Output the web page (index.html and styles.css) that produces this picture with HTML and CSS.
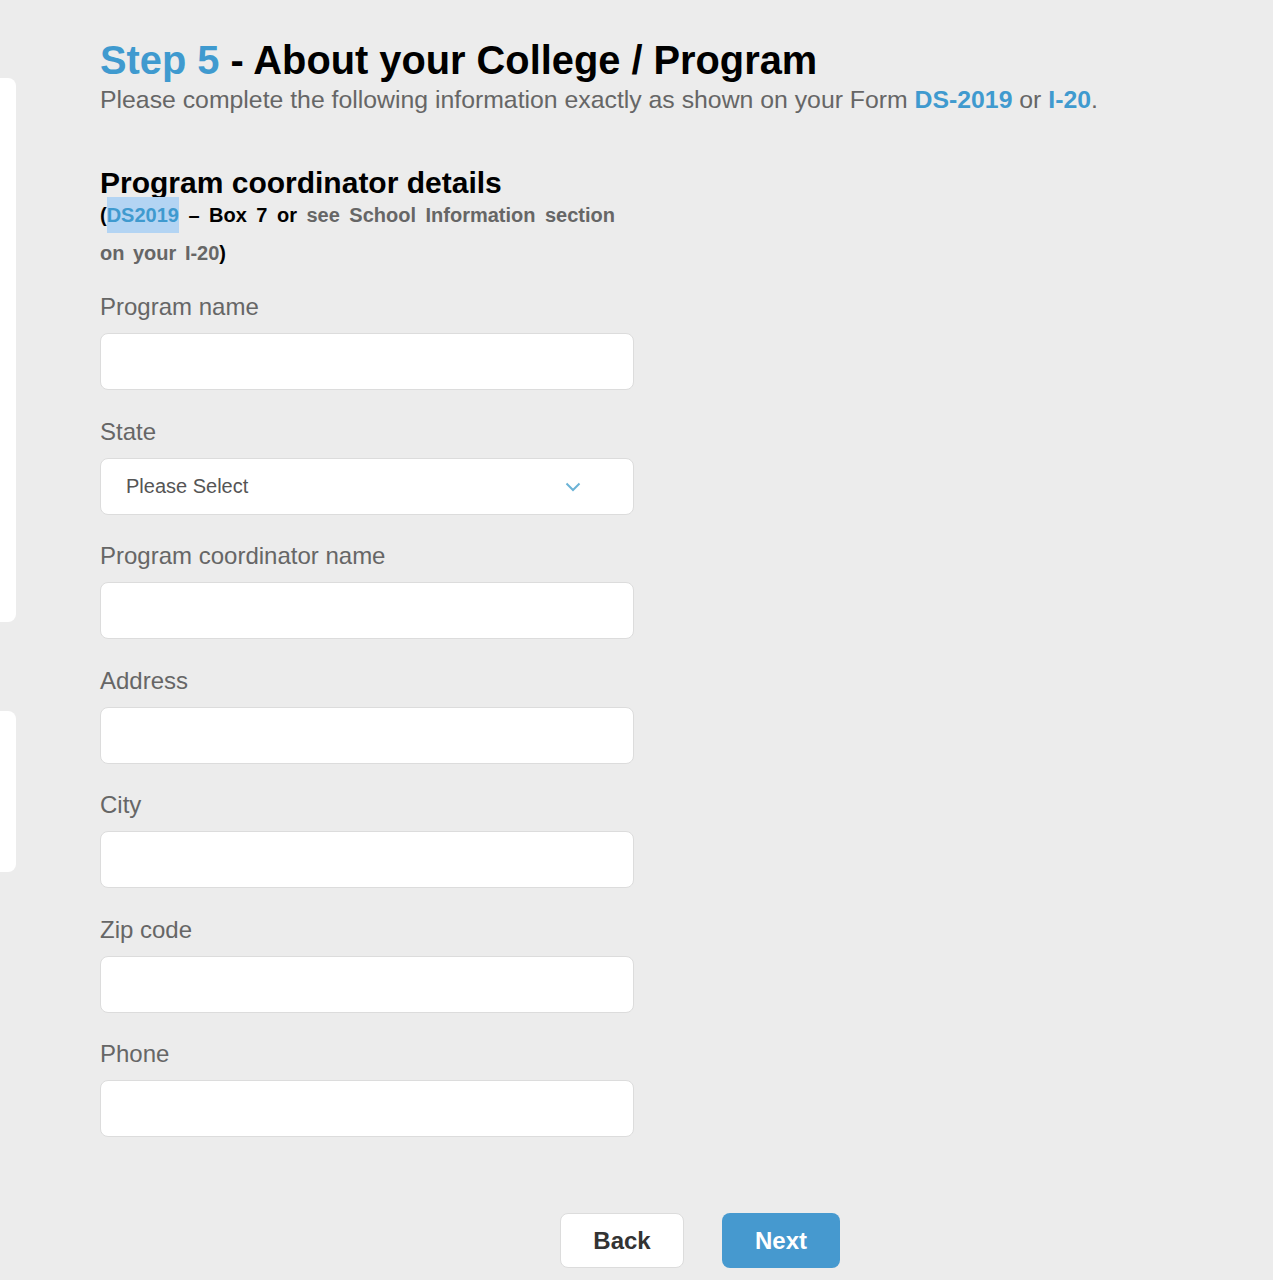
FILE: index.html
```html
<!DOCTYPE html>
<html lang="en">
<head>
    <meta charset="UTF-8">
    <meta name="viewport" content="width=device-width, initial-scale=1.0">
    <title>Step 5 - About your College / Program</title>
    <link rel="stylesheet" href="styles.css">
</head>
<body>

    <div class="page">
        <div class="side">
            <div class="side-card side-card-top"></div>
            <div class="side-card side-card-bottom"></div>
        </div>

        <div class="main">
            <h1><span class="step">Step 5</span> - About your College / Program</h1>
            <p class="intro">Please complete the following information exactly as shown on your Form <a href="#">DS-2019</a> or <a href="#">I-20</a>.</p>

            <div class="form">
                <h2>Program coordinator details</h2>
                <p class="hint">(<span class="ds">DS2019</span> &ndash; Box 7 or <span class="grey">see School Information section on your I-20</span>)</p>

                <div class="form-group">
                    <label for="programName">Program name</label>
                    <input type="text" id="programName">
                </div>

                <div class="form-group">
                    <label for="state">State</label>
                    <div class="select-box">
                        <select id="state">
                            <option>Please Select</option>
                            <option>Alabama</option>
                            <option>Alaska</option>
                            <option>Arizona</option>
                        </select>
                        <svg class="chevron" width="16" height="10" viewBox="0 0 16 10"><path d="M1.5 1.5 L8 8 L14.5 1.5" fill="none" stroke="#6bb3d6" stroke-width="2"/></svg>
                    </div>
                </div>

                <div class="form-group">
                    <label for="coordName">Program coordinator name</label>
                    <input type="text" id="coordName">
                </div>

                <div class="form-group">
                    <label for="address">Address</label>
                    <input type="text" id="address">
                </div>

                <div class="form-group">
                    <label for="city">City</label>
                    <input type="text" id="city">
                </div>

                <div class="form-group">
                    <label for="zip">Zip code</label>
                    <input type="text" id="zip">
                </div>

                <div class="form-group">
                    <label for="phone">Phone</label>
                    <input type="text" id="phone">
                </div>
            </div>

            <div class="buttons">
                <button class="btn btn-back">Back</button>
                <button class="btn btn-next">Next</button>
            </div>
        </div>
    </div>

</body>
</html>
```

FILE: styles.css
```css
body {
    margin: 0;
    background-color: #ececec;
    font-family: "Liberation Sans", Arial, sans-serif;
}
.page {
    display: flex;
}
.side {
    width: 16px;
    flex-shrink: 0;
    padding-top: 78px;
}
.side-card {
    background-color: #fff;
    border-radius: 0 8px 8px 0;
}
.side-card-top {
    height: 544px;
}
.side-card-bottom {
    height: 161px;
    margin-top: 89px;
}
.main {
    padding: 35px 0 12px 84px;
    flex: 1;
}
h1 {
    margin: 0;
    font-size: 39.8px;
    line-height: 50px;
    color: #000;
}
.step {
    color: #3f9acf;
}
.intro {
    margin: 0;
    font-size: 24.8px;
    line-height: 29px;
    color: #666;
}
.intro a {
    color: #3f9acf;
    font-weight: bold;
    text-decoration: none;
}
.form {
    width: 534px;
    margin-top: 51px;
}
h2 {
    margin: 0;
    font-size: 30px;
    line-height: 36px;
    color: #000;
}
.hint {
    width: 515px;
    margin: -5px 0 0;
    font-size: 20px;
    font-weight: bold;
    line-height: 38px;
    word-spacing: 3px;
    text-align: justify;
    color: #000;
}
.ds {
    display: inline-block;
    line-height: 36px;
    color: #3f9acf;
    background-color: #b3d4f3;
    word-spacing: 0;
}
.grey {
    color: #666;
}
.form-group {
    margin-top: 19px;
}
.form-group + .form-group {
    margin-top: 25.5px;
}
label {
    display: block;
    font-size: 24px;
    line-height: 32px;
    color: #666;
    margin-bottom: 10px;
}
input, select {
    display: block;
    width: 100%;
    height: 57px;
    box-sizing: border-box;
    border: 1px solid #dcdcdc;
    border-radius: 8px;
    background-color: #fff;
    font-family: inherit;
    font-size: 20px;
    padding: 0 25px;
}
.select-box {
    position: relative;
}
select {
    appearance: none;
    -webkit-appearance: none;
    color: #555;
}
.chevron {
    position: absolute;
    right: 53px;
    top: 24px;
    pointer-events: none;
}
.buttons {
    display: flex;
    gap: 38px;
    margin-top: 76px;
    padding-left: 460px;
}
.btn {
    height: 55px;
    border-radius: 8px;
    font-family: inherit;
    font-size: 24px;
    font-weight: bold;
    cursor: pointer;
}
.btn-back {
    width: 124px;
    background-color: #fff;
    color: #333;
    border: 1px solid #dcdcdc;
}
.btn-next {
    width: 118px;
    background-color: #4699cf;
    color: #fff;
    border: none;
}
```
